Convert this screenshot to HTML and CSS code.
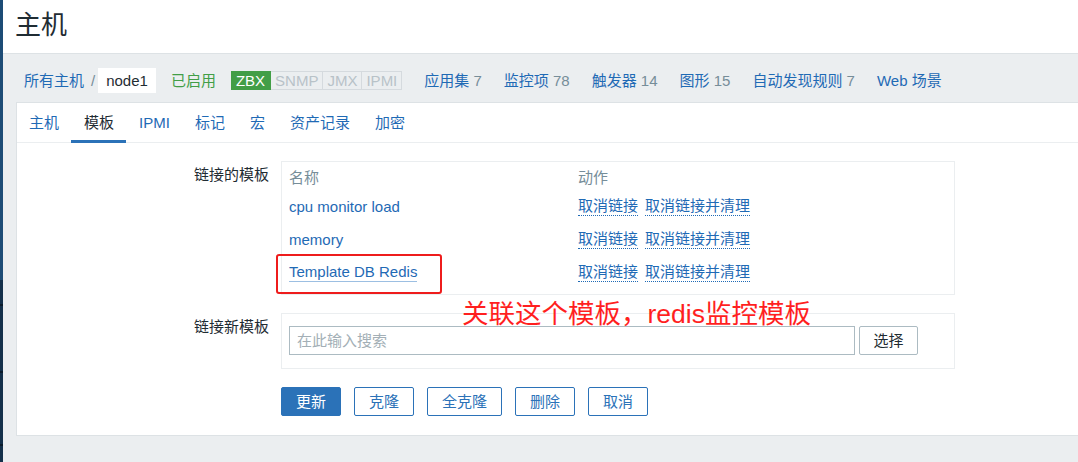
FILE: index.html
```html
<!DOCTYPE html>
<html lang="zh-CN">
<head>
<meta charset="utf-8">
<title>主机</title>
<link rel="stylesheet" href="styles.css">
</head>
<body>
<div class="app">
  <div class="sidebar"></div>
  <div class="page">
    <header class="top"><h1>主机</h1></header>
    <div class="content">
      <nav class="crumbs">
        <a class="link">所有主机</a>
        <span class="sep">/</span>
        <span class="current">node1</span>
        <span class="enabled">已启用</span>
        <span class="avail">
          <span class="badge on">ZBX</span><span class="badge">SNMP</span><span class="badge">JMX</span><span class="badge">IPMI</span>
        </span>
        <a class="link sub">应用集 <span class="cnt">7</span></a>
        <a class="link sub">监控项 <span class="cnt">78</span></a>
        <a class="link sub">触发器 <span class="cnt">14</span></a>
        <a class="link sub">图形 <span class="cnt">15</span></a>
        <a class="link sub">自动发现规则 <span class="cnt">7</span></a>
        <a class="link sub">Web 场景</a>
      </nav>
      <section class="panel">
        <ul class="tabs">
          <li class="tab">主机</li>
          <li class="tab active">模板</li>
          <li class="tab">IPMI</li>
          <li class="tab">标记</li>
          <li class="tab">宏</li>
          <li class="tab">资产记录</li>
          <li class="tab">加密</li>
        </ul>
        <div class="form">
          <div class="row">
            <div class="label">链接的模板</div>
            <div class="box tbl">
              <div class="tr th"><span>名称</span><span>动作</span></div>
              <div class="tr"><span><a class="link">cpu monitor load</a></span><span class="acts"><a class="dot">取消链接</a><a class="dot">取消链接并清理</a></span></div>
              <div class="tr"><span><a class="link">memory</a></span><span class="acts"><a class="dot">取消链接</a><a class="dot">取消链接并清理</a></span></div>
              <div class="tr"><span><a class="link focus">Template DB Redis</a></span><span class="acts"><a class="dot">取消链接</a><a class="dot">取消链接并清理</a></span></div>
            </div>
          </div>
          <div class="row">
            <div class="label">链接新模板</div>
            <div class="box ms">
              <input class="search" type="text" placeholder="在此输入搜索">
              <button class="btn-grey" type="button">选择</button>
            </div>
          </div>
          <div class="row">
            <div></div>
            <div class="buttons">
              <button class="btn main" type="button">更新</button>
              <button class="btn" type="button">克隆</button>
              <button class="btn" type="button">全克隆</button>
              <button class="btn" type="button">删除</button>
              <button class="btn" type="button">取消</button>
            </div>
          </div>
        </div>
        <div class="mark"></div>
        <div class="note">关联这个模板，redis监控模板</div>
      </section>
    </div>
  </div>
</div>
</body>
</html>
```

FILE: styles.css
```css
* { box-sizing: border-box; }
html, body { margin: 0; padding: 0; }
body {
  font: 15px/18px "Liberation Sans", "Noto Sans CJK SC", sans-serif;
  color: #1f2c33;
  background: #ebeef0;
}
.app { display: flex; height: 462px; overflow: hidden; }
.sidebar {
  width: 3px;
  flex: none;
  background: linear-gradient(to bottom,
    #1d4c76 0, #1d4c76 280px,
    #14304a 280px, #14304a 304px, #0b1c2c 304px, #0b1c2c 306px,
    #14304a 306px, #14304a 371px, #0b1c2c 371px, #0b1c2c 373px,
    #14304a 373px, #14304a 444px, #0b1c2c 444px, #0b1c2c 446px,
    #14304a 446px);
}
.page { flex: 1; min-width: 0; display: flex; flex-direction: column; }
.top {
  height: 54px;
  flex: none;
  background: #fff;
  border-bottom: 1px solid #dde2e5;
  display: flex;
  align-items: center;
  padding: 0 0 4px 12px;
}
.top h1 { margin: 0; font-size: 26px; line-height: 30px; font-weight: normal; color: #1f2c33; }

.content { padding-left: 13px; }
.link { color: #1f6ab5; text-decoration: none; cursor: pointer; }
.crumbs {
  display: flex;
  align-items: center;
  height: 48px;
  padding: 14px 0 9px 8px;
  white-space: nowrap;
}
.sep { color: #768d99; margin: 0 3px 0 7px; }
.current {
  background: #fff;
  height: 25px;
  line-height: 25px;
  padding: 0 8px;
  color: #1f2c33;
}
.enabled { color: #429e47; margin-left: 15px; }
.avail { display: flex; margin-left: 15px; }
.badge {
  height: 19px;
  line-height: 17px;
  padding: 0 4px;
  border: 1px solid #d5dade;
  border-left: none;
  color: #b8c2c8;
}
.badge.on {
  background: #429e47;
  border-color: #429e47;
  color: #fff;
  padding: 0 5px 0 5px;
}
.sub { margin-left: 22px; }
.cnt { color: #768d99; }

.panel {
  position: relative;
  background: #fff;
  border: 1px solid #dde2e5;
  border-right: none;
  padding-bottom: 19px;
}
.tabs {
  display: flex;
  list-style: none;
  margin: 0;
  padding: 0;
  height: 40px;
  border-bottom: 1px solid #ebeef0;
}
.tab {
  position: relative;
  padding: 0 12px 0 12px;
  line-height: 39px;
  color: #1f6ab5;
}
.tab + .tab { padding-left: 13px; }
.tab.active { color: #1f2c33; }
.tab.active::after {
  content: "";
  position: absolute;
  left: 0;
  right: 0;
  bottom: -1px;
  height: 3px;
  background: #2b72b8;
}

.form { padding-top: 18px; }
.row {
  display: grid;
  grid-template-columns: 252px 674px;
  column-gap: 12px;
  margin-bottom: 18px;
}
.row:last-child { margin-bottom: 0; }
.label { text-align: right; padding-top: 5px; line-height: 18px; }
.box { border: 1px solid #ebeef0; }
.tbl { padding: 4px 0 5px 7px; }
.tr {
  display: grid;
  grid-template-columns: 289px 1fr;
  height: 33px;
  align-items: center;
}
.tr.th { height: 24px; color: #768d99; }
.acts { display: flex; gap: 7px; }
.dot {
  display: inline-block;
  color: #1f6ab5;
  line-height: 18px;
  border-bottom: 1px dotted #1f6ab5;
}
.focus {
  display: inline-block;
  line-height: 18px;
  border-bottom: 1px solid #9cbfe2;
}
.ms { display: flex; gap: 4px; padding: 12px 7px 13px 7px; }
.search {
  width: 566px;
  height: 29px;
  border: 1px solid #acbbc2;
  padding: 0 7px;
  font: inherit;
  color: #1f2c33;
  outline: none;
}
.search::placeholder { color: #a3afb6; }
.btn-grey {
  width: 59px;
  height: 29px;
  border: 1px solid #acbbc2;
  border-radius: 2px;
  background: #fff;
  font: inherit;
  color: #1f2c33;
  padding: 0;
}
.buttons { display: flex; gap: 13px; }
.btn {
  height: 29px;
  padding: 0 14px;
  border: 1px solid #2b72b8;
  border-radius: 2px;
  background: #fff;
  color: #2b72b8;
  font: inherit;
}
.btn.main { background: #2b72b8; color: #fff; }

.mark {
  position: absolute;
  left: 259px;
  top: 151px;
  width: 166px;
  height: 40px;
  border: 2px solid #ee1c1c;
  border-radius: 3px;
}
.note {
  position: absolute;
  left: 445px;
  top: 196px;
  font-size: 26.5px;
  line-height: 30px;
  color: #ff1f1f;
  white-space: nowrap;
}
```
